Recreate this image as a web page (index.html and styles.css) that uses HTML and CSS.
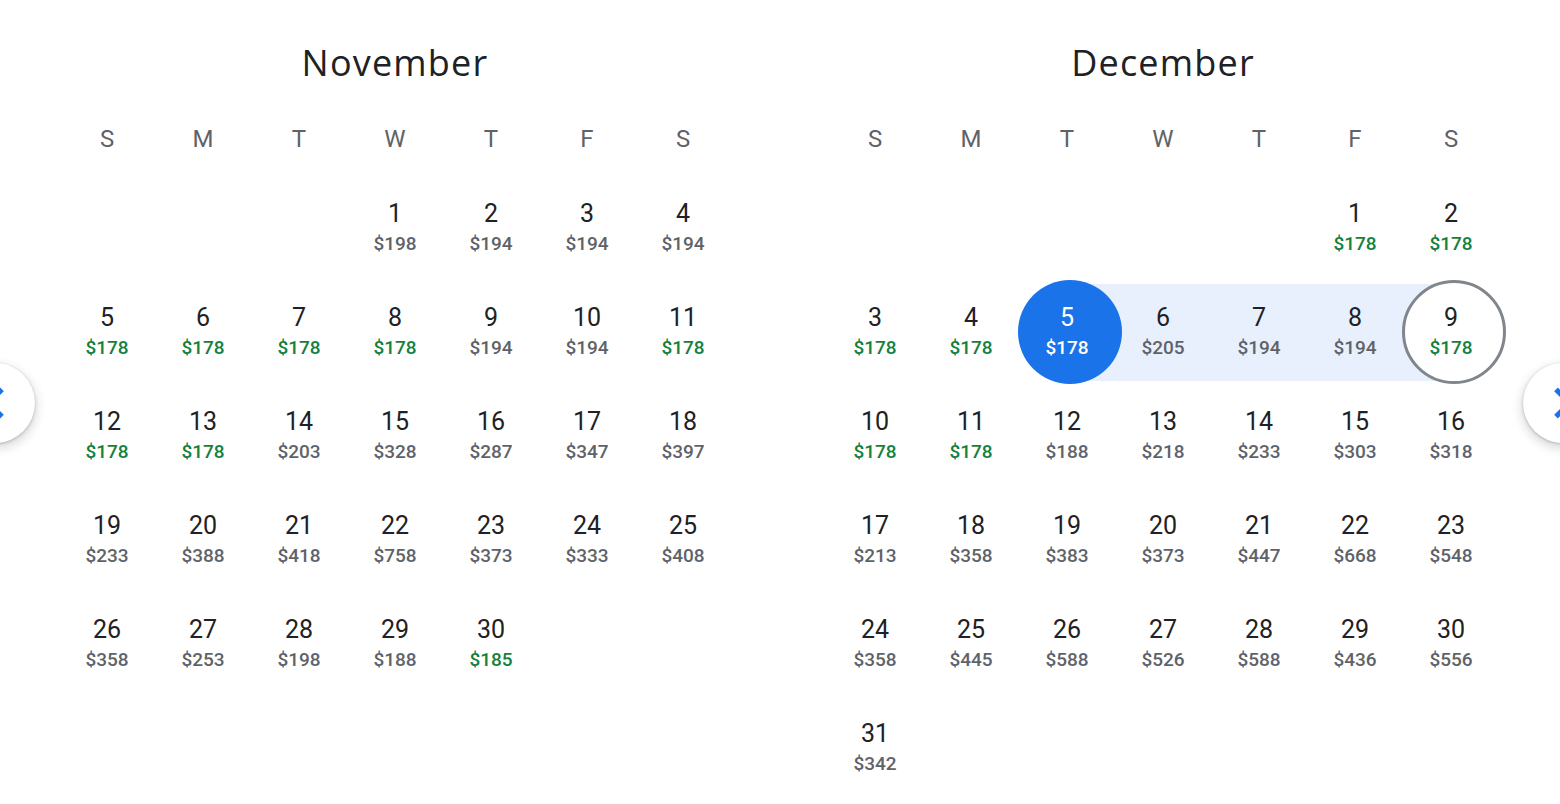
FILE: index.html
```html
<!DOCTYPE html>
<html>
<head>
<meta charset="utf-8">
<link rel="stylesheet" href="styles.css">
</head>
<body>
<div class="page">
  <button class="nav prev" aria-label="Previous">
    <svg viewBox="0 0 24 24" width="62" height="62"><path fill="#1a73e8" d="M15.41 7.41L14 6l-6 6 6 6 1.41-1.41L10.83 12z"/></svg>
  </button>
  <button class="nav next" aria-label="Next">
    <svg viewBox="0 0 24 24" width="62" height="62"><path fill="#1a73e8" d="M10 6L8.59 7.41 13.17 12l-4.58 4.59L10 18l6-6z"/></svg>
  </button>
  <div class="months">
    <section class="month">
      <h2 class="title">November</h2>
      <div class="grid weekdays"><span>S</span><span>M</span><span>T</span><span>W</span><span>T</span><span>F</span><span>S</span></div>
      <div class="grid days">
        <div class="cell"></div><div class="cell"></div><div class="cell"></div>
        <div class="cell"><span class="num">1</span><span class="price">$198</span></div>
        <div class="cell"><span class="num">2</span><span class="price">$194</span></div>
        <div class="cell"><span class="num">3</span><span class="price">$194</span></div>
        <div class="cell"><span class="num">4</span><span class="price">$194</span></div>

        <div class="cell"><span class="num">5</span><span class="price low">$178</span></div>
        <div class="cell"><span class="num">6</span><span class="price low">$178</span></div>
        <div class="cell"><span class="num">7</span><span class="price low">$178</span></div>
        <div class="cell"><span class="num">8</span><span class="price low">$178</span></div>
        <div class="cell"><span class="num">9</span><span class="price">$194</span></div>
        <div class="cell"><span class="num">10</span><span class="price">$194</span></div>
        <div class="cell"><span class="num">11</span><span class="price low">$178</span></div>

        <div class="cell"><span class="num">12</span><span class="price low">$178</span></div>
        <div class="cell"><span class="num">13</span><span class="price low">$178</span></div>
        <div class="cell"><span class="num">14</span><span class="price">$203</span></div>
        <div class="cell"><span class="num">15</span><span class="price">$328</span></div>
        <div class="cell"><span class="num">16</span><span class="price">$287</span></div>
        <div class="cell"><span class="num">17</span><span class="price">$347</span></div>
        <div class="cell"><span class="num">18</span><span class="price">$397</span></div>

        <div class="cell"><span class="num">19</span><span class="price">$233</span></div>
        <div class="cell"><span class="num">20</span><span class="price">$388</span></div>
        <div class="cell"><span class="num">21</span><span class="price">$418</span></div>
        <div class="cell"><span class="num">22</span><span class="price">$758</span></div>
        <div class="cell"><span class="num">23</span><span class="price">$373</span></div>
        <div class="cell"><span class="num">24</span><span class="price">$333</span></div>
        <div class="cell"><span class="num">25</span><span class="price">$408</span></div>

        <div class="cell"><span class="num">26</span><span class="price">$358</span></div>
        <div class="cell"><span class="num">27</span><span class="price">$253</span></div>
        <div class="cell"><span class="num">28</span><span class="price">$198</span></div>
        <div class="cell"><span class="num">29</span><span class="price">$188</span></div>
        <div class="cell"><span class="num">30</span><span class="price low">$185</span></div>
      </div>
    </section>
    <section class="month">
      <h2 class="title">December</h2>
      <div class="grid weekdays"><span>S</span><span>M</span><span>T</span><span>W</span><span>T</span><span>F</span><span>S</span></div>
      <div class="grid days">
        <div class="cell"></div><div class="cell"></div><div class="cell"></div><div class="cell"></div><div class="cell"></div>
        <div class="cell"><span class="num">1</span><span class="price low">$178</span></div>
        <div class="cell"><span class="num">2</span><span class="price low">$178</span></div>

        <div class="cell"><span class="num">3</span><span class="price low">$178</span></div>
        <div class="cell"><span class="num">4</span><span class="price low">$178</span></div>
        <div class="cell range-start"><span class="num">5</span><span class="price low">$178</span></div>
        <div class="cell in-range"><span class="num">6</span><span class="price">$205</span></div>
        <div class="cell in-range"><span class="num">7</span><span class="price">$194</span></div>
        <div class="cell in-range"><span class="num">8</span><span class="price">$194</span></div>
        <div class="cell range-end"><span class="num">9</span><span class="price low">$178</span></div>

        <div class="cell"><span class="num">10</span><span class="price low">$178</span></div>
        <div class="cell"><span class="num">11</span><span class="price low">$178</span></div>
        <div class="cell"><span class="num">12</span><span class="price">$188</span></div>
        <div class="cell"><span class="num">13</span><span class="price">$218</span></div>
        <div class="cell"><span class="num">14</span><span class="price">$233</span></div>
        <div class="cell"><span class="num">15</span><span class="price">$303</span></div>
        <div class="cell"><span class="num">16</span><span class="price">$318</span></div>

        <div class="cell"><span class="num">17</span><span class="price">$213</span></div>
        <div class="cell"><span class="num">18</span><span class="price">$358</span></div>
        <div class="cell"><span class="num">19</span><span class="price">$383</span></div>
        <div class="cell"><span class="num">20</span><span class="price">$373</span></div>
        <div class="cell"><span class="num">21</span><span class="price">$447</span></div>
        <div class="cell"><span class="num">22</span><span class="price">$668</span></div>
        <div class="cell"><span class="num">23</span><span class="price">$548</span></div>

        <div class="cell"><span class="num">24</span><span class="price">$358</span></div>
        <div class="cell"><span class="num">25</span><span class="price">$445</span></div>
        <div class="cell"><span class="num">26</span><span class="price">$588</span></div>
        <div class="cell"><span class="num">27</span><span class="price">$526</span></div>
        <div class="cell"><span class="num">28</span><span class="price">$588</span></div>
        <div class="cell"><span class="num">29</span><span class="price">$436</span></div>
        <div class="cell"><span class="num">30</span><span class="price">$556</span></div>

        <div class="cell"><span class="num">31</span><span class="price">$342</span></div>
      </div>
    </section>
  </div>
</div>
</body>
</html>
```

FILE: styles.css
```css
html, body {
  margin: 0;
  padding: 0;
  background: #fff;
}
body {
  width: 1560px;
  height: 804px;
  overflow: hidden;
  font-family: Roboto, "Liberation Sans", Arial, sans-serif;
  color: #202124;
}
.page {
  position: relative;
  width: 1560px;
  height: 804px;
}
.months {
  display: flex;
  gap: 96px;
  padding: 43px 0 0 59px;
}
.month {
  width: 672px;
}
.title {
  margin: 0;
  height: 40px;
  line-height: 40px;
  text-align: center;
  font-family: "Open Sans", Roboto, sans-serif;
  font-weight: 500;
  font-size: 36px;
  letter-spacing: 1.2px;
  color: #202124;
}
.grid {
  display: grid;
  grid-template-columns: repeat(7, 96px);
}
.weekdays {
  margin-top: 20px;
  height: 73px;
  line-height: 73px;
  text-align: center;
  font-size: 24px;
  color: #5f6368;
}
.days {
  grid-auto-rows: 104px;
}
.cell {
  position: relative;
  display: flex;
  flex-direction: column;
  align-items: center;
  padding-top: 23px;
  box-sizing: border-box;
}
.num {
  position: relative;
  z-index: 2;
  height: 30px;
  line-height: 30px;
  font-size: 25px;
  color: #202124;
}
.price {
  position: relative;
  z-index: 2;
  margin-top: 3px;
  height: 24px;
  line-height: 24px;
  font-size: 19px;
  font-weight: 500;
  color: #5f6368;
}
.price.low {
  color: #188038;
}
.in-range::before,
.range-start::before,
.range-end::before {
  content: "";
  position: absolute;
  top: 4px;
  bottom: 3px;
  left: 0;
  right: 0;
  background: #e8f0fe;
  z-index: 0;
}
.range-start::before {
  left: calc(50% + 3px);
}
.range-end::before {
  right: calc(50% - 3px);
}
.range-start::after,
.range-end::after {
  content: "";
  position: absolute;
  top: 0;
  left: calc(50% + 3px - 52px);
  width: 104px;
  height: 104px;
  border-radius: 50%;
  box-sizing: border-box;
  z-index: 1;
}
.range-start::after {
  background: #1a73e8;
}
.range-end::after {
  background: #fff;
  border: 3px solid #80868b;
}
.range-start .num,
.range-start .price {
  color: #fff;
}
.nav {
  position: absolute;
  top: 363px;
  width: 80px;
  height: 80px;
  border: none;
  border-radius: 50%;
  background: #fff;
  padding: 0;
  display: flex;
  align-items: center;
  justify-content: center;
  box-shadow: 0 1px 3px rgba(60, 64, 67, 0.3), 0 4px 8px 3px rgba(60, 64, 67, 0.15);
  z-index: 5;
}
.nav svg {
  flex: none;
  display: block;
}
.prev {
  left: -45px;
}
.next {
  left: 1523px;
}
```
